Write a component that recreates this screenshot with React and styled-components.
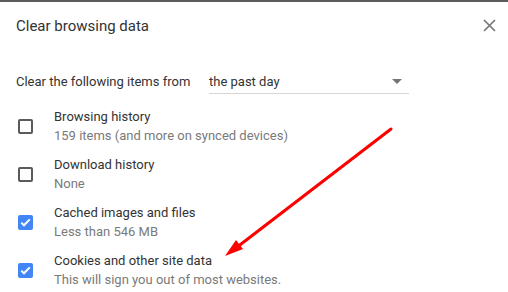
import React from "react";
import styled, { createGlobalStyle } from "styled-components";

const GlobalStyle = createGlobalStyle`
  html, body {
    margin: 0;
    padding: 0;
    background: #fff;
  }
  body {
    font-family: Roboto, "Liberation Sans", Arial, sans-serif;
    -webkit-font-smoothing: antialiased;
  }
`;

const items = [
  { title: "Browsing history", sub: "159 items (and more on synced devices)", checked: false },
  { title: "Download history", sub: "None", checked: false },
  { title: "Cached images and files", sub: "Less than 546 MB", checked: true },
  { title: "Cookies and other site data", sub: "This will sign you out of most websites.", checked: true },
];

const Checkbox = ({ checked }) => (
  <Box checked={checked}>
    {checked && (
      <svg width="11" height="9" viewBox="0 0 11 9">
        <path d="M1.2 4.6 L4 7.3 L9.8 1.4" fill="none" stroke="#fff" strokeWidth="2" />
      </svg>
    )}
  </Box>
);

const App = () => {
  return (
    <Dialog>
      <GlobalStyle />
      <TopBar />
      <Header>
        <Title>Clear browsing data</Title>
        <Close>
          <svg width="13" height="13" viewBox="0 0 13 13">
            <path d="M1 1 L12 12 M12 1 L1 12" stroke="#777" strokeWidth="1.7" />
          </svg>
        </Close>
      </Header>
      <RangeRow>
        <RangeLabel>Clear the following items from</RangeLabel>
        <Select>
          <span>the past day</span>
          <Caret />
        </Select>
      </RangeRow>
      <List>
        {items.map((it) => (
          <Row key={it.title}>
            <Checkbox checked={it.checked} />
            <Texts>
              <ItemTitle>{it.title}</ItemTitle>
              <ItemSub>{it.sub}</ItemSub>
            </Texts>
          </Row>
        ))}
      </List>
      <Arrow width="508" height="292" viewBox="0 0 508 292">
        <line x1="391" y1="129" x2="232" y2="251" stroke="#f00" strokeWidth="3" strokeLinecap="round" />
        <path d="M225 256 L236 240 L243 249 Z" fill="#f00" />
      </Arrow>
    </Dialog>
  );
};

const Dialog = styled.div`
  position: relative;
  width: 508px;
  height: 292px;
  overflow: hidden;
  background: #fff;
`;

const TopBar = styled.div`
  height: 2px;
  background: #5c5c5c;
`;

const Header = styled.div`
  display: flex;
  align-items: center;
  justify-content: space-between;
  height: 48px;
  padding: 0 12px 0 16px;
`;

const Title = styled.div`
  font-size: 15px;
  color: #333;
`;

const Close = styled.div`
  display: flex;
  width: 13px;
  height: 13px;
  margin-top: -2px;
`;

const RangeRow = styled.div`
  display: flex;
  align-items: center;
  margin-top: 17px;
  padding: 0 16px;
  height: 27px;
`;

const RangeLabel = styled.div`
  font-size: 13px;
  color: #333;
  width: 193px;
  padding-top: 2px;
`;

const Select = styled.div`
  display: flex;
  align-items: center;
  justify-content: space-between;
  width: 200px;
  height: 27px;
  box-sizing: border-box;
  border-bottom: 1px solid #d6d6d6;
  padding: 2px 7px 0 0;
  font-size: 13px;
  color: #333;
`;

const Caret = styled.div`
  width: 0;
  height: 0;
  border-left: 5px solid transparent;
  border-right: 5px solid transparent;
  border-top: 5px solid #757575;
  margin-top: 1px;
`;

const List = styled.div`
  display: flex;
  flex-direction: column;
  margin-top: 8px;
`;

const Row = styled.div`
  display: flex;
  align-items: center;
  height: 48px;
  padding-left: 18px;
`;

const Box = styled.div`
  width: 15px;
  height: 15px;
  box-sizing: border-box;
  border-radius: 2px;
  border: ${(p) => (p.checked ? "none" : "2px solid #5a5a5a")};
  background: ${(p) => (p.checked ? "#4285f4" : "transparent")};
  display: flex;
  align-items: center;
  justify-content: center;
  margin-right: 21px;
`;

const Texts = styled.div`
  display: flex;
  flex-direction: column;
`;

const ItemTitle = styled.div`
  font-size: 13px;
  line-height: 19px;
  color: #333;
`;

const ItemSub = styled.div`
  font-size: 13px;
  line-height: 19px;
  color: #7a7a7a;
`;

const Arrow = styled.svg`
  position: absolute;
  left: 0;
  top: 0;
  pointer-events: none;
`;

export default App;
